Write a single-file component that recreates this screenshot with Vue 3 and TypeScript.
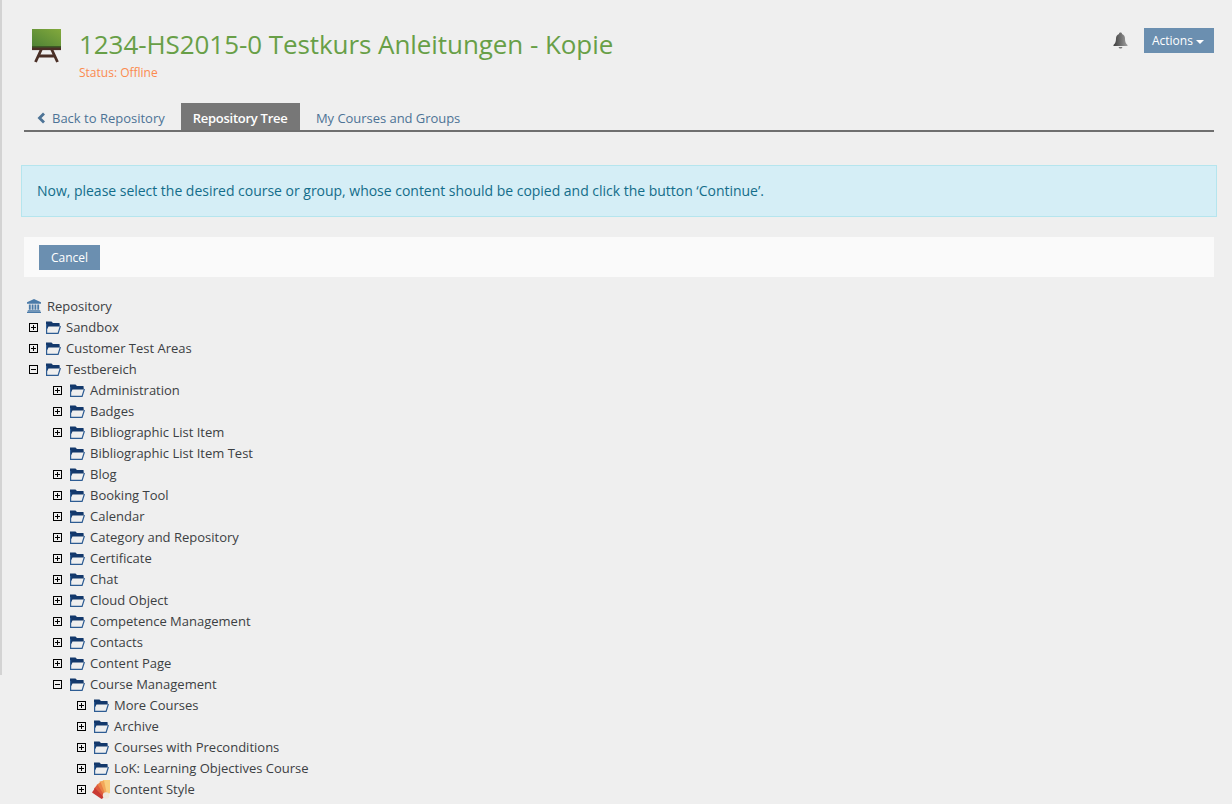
<template>
  <div class="page">
    <div class="side-strip"></div>

    <header class="head">
      <svg class="course-icon" width="30" height="34" viewBox="0 0 30 34">
        <defs>
          <linearGradient id="board" x1="0" y1="1" x2="1" y2="0">
            <stop offset="0" stop-color="#4f8336" />
            <stop offset="1" stop-color="#83a93c" />
          </linearGradient>
        </defs>
        <rect x="0" y="0" width="29" height="17" fill="url(#board)" />
        <rect x="0" y="17" width="29" height="2.5" fill="#3d5a26" />
        <path d="M0 18.500h29v2.600H0z" fill="#4a2f26" />
        <path d="M9.500 20 3.500 33M19.500 20l6 13M6.500 27h16" stroke="#4a2f26" stroke-width="2.800" fill="none" />
      </svg>
      <div class="head-text">
        <h1>1234-HS2015-0 Testkurs Anleitungen - Kopie</h1>
        <div class="status">Status: Offline</div>
      </div>
      <svg class="bell" width="15" height="17" viewBox="0 0 15 17">
        <defs>
          <linearGradient id="bellfill" x1="0" y1="0" x2="1" y2="0">
            <stop offset="0" stop-color="#3d3d3d" />
            <stop offset="1" stop-color="#a0a0a0" />
          </linearGradient>
        </defs>
        <path d="M7.500 0.500c1 0 1.500.6 1.500 1.400 2 .6 3 2.300 3 4.600 0 3 .6 4.700 2.500 6.500v1H.5v-1C2.400 11.200 3 9.500 3 6.500c0-2.300 1-4 3-4.600C6 1.100 6.500.5 7.500.5z" fill="url(#bellfill)" />
        <path d="M5.600 15h3.800c-.2 1-1 1.600-1.900 1.600S5.800 16 5.600 15z" fill="#777" />
      </svg>
      <button class="btn actions">Actions <span class="caret"></span></button>
    </header>

    <nav class="tabs">
      <a class="tab">
        <svg width="9" height="12" viewBox="0 0 9 12"><path d="M7 1.500 2.500 6 7 10.500" fill="none" stroke="#4d7396" stroke-width="2.800" /></svg>
        Back to Repository
      </a>
      <a class="tab active">Repository Tree</a>
      <a class="tab">My Courses and Groups</a>
    </nav>

    <div class="alert">Now, please select the desired course or group, whose content should be copied and click the button ‘Continue’.</div>

    <div class="button-bar">
      <button class="btn">Cancel</button>
    </div>

    <div class="tree">
      <div class="row">
        <svg class="root-icon" width="14" height="14" viewBox="0 0 15 15">
          <path d="M7.500 0 15 3.600V5H0V3.600z" fill="#4a7aa8" />
          <path d="M2 5.800h2v5.700H2zM5 5.800h2v5.700H5zM8 5.800h2v5.700H8zM11 5.800h2v5.700h-2z" fill="#4a7aa8" />
          <path d="M.8 12h13.400v1.300H.8zM0 13.700h15V15H0z" fill="#4a7aa8" />
        </svg>
        <span>Repository</span>
      </div>
      <div v-for="item in items" :key="item.label" class="row" :class="'depth-' + item.depth">
        <svg v-if="item.toggle" class="toggle" width="9" height="9" viewBox="0 0 9 9">
          <rect x=".5" y=".5" width="8" height="8" fill="none" stroke="#000" />
          <path d="M2 4.500h5" stroke="#000" />
          <path v-if="item.toggle === 'plus'" d="M4.500 2v5" stroke="#000" />
        </svg>
        <span v-else class="toggle"></span>
        <svg v-if="item.icon === 'style'" class="fan-icon" width="19" height="21" viewBox="0 0 19 21">
          <path d="M11 1h7v13l-4 2z" fill="#f9cd7c" />
          <path d="M7.500 2.500 12 1.500l3 14-3 1.500z" fill="#f2a85a" />
          <path d="M4.500 6 8.500 3l5.500 14-3 1z" fill="#e87f45" />
          <path d="M2 9.500 5.500 5.500 13 17.500l-3 1z" fill="#dd5a3c" />
          <path d="M0 13.500 3 9l9 9.500-2.500 1.500z" fill="#c93a33" />
          <circle cx="14" cy="16.500" r="3.200" fill="#efe7dc" />
        </svg>
        <svg v-else class="node-icon" width="15" height="13" viewBox="0 0 15 13">
          <path d="M0 .5h5.500L7 2h6.500l.3 3.500H2.500L1.200 8H0z" fill="#13386b" />
          <path d="M.6 3v9.400h11.500L14.400 5" fill="none" stroke="#2d5c93" stroke-width="1.200" />
        </svg>
        <span>{{ item.label }}</span>
      </div>
    </div>
  </div>
</template>

<script setup lang="ts">
interface TreeItem {
  label: string
  depth: number
  toggle?: 'plus' | 'minus'
  icon?: 'style'
}

const items: TreeItem[] = [
  { label: 'Sandbox', depth: 0, toggle: 'plus' },
  { label: 'Customer Test Areas', depth: 0, toggle: 'plus' },
  { label: 'Testbereich', depth: 0, toggle: 'minus' },
  { label: 'Administration', depth: 1, toggle: 'plus' },
  { label: 'Badges', depth: 1, toggle: 'plus' },
  { label: 'Bibliographic List Item', depth: 1, toggle: 'plus' },
  { label: 'Bibliographic List Item Test', depth: 1 },
  { label: 'Blog', depth: 1, toggle: 'plus' },
  { label: 'Booking Tool', depth: 1, toggle: 'plus' },
  { label: 'Calendar', depth: 1, toggle: 'plus' },
  { label: 'Category and Repository', depth: 1, toggle: 'plus' },
  { label: 'Certificate', depth: 1, toggle: 'plus' },
  { label: 'Chat', depth: 1, toggle: 'plus' },
  { label: 'Cloud Object', depth: 1, toggle: 'plus' },
  { label: 'Competence Management', depth: 1, toggle: 'plus' },
  { label: 'Contacts', depth: 1, toggle: 'plus' },
  { label: 'Content Page', depth: 1, toggle: 'plus' },
  { label: 'Course Management', depth: 1, toggle: 'minus' },
  { label: 'More Courses', depth: 2, toggle: 'plus' },
  { label: 'Archive', depth: 2, toggle: 'plus' },
  { label: 'Courses with Preconditions', depth: 2, toggle: 'plus' },
  { label: 'LoK: Learning Objectives Course', depth: 2, toggle: 'plus' },
  { label: 'Content Style', depth: 2, toggle: 'plus', icon: 'style' }
]
</script>

<style>
html,
body {
  margin: 0;
  height: 804px;
  overflow: hidden;
  background: #efefef;
}
</style>

<style scoped>
.page {
  position: relative;
  height: 804px;
  overflow: hidden;
  padding: 29px 18px 0 24px;
  box-sizing: border-box;
  font-family: "Open Sans", sans-serif;
  font-size: 13px;
  color: #3c4043;
  background: #efefef;
}

.side-strip {
  position: absolute;
  left: 0;
  top: 0;
  width: 2px;
  height: 675px;
  background: #d3d3d3;
}

.head {
  display: flex;
  align-items: flex-start;
  height: 74px;
  padding-left: 8px;
}

.course-icon {
  flex: none;
}

.head-text {
  margin-left: 17px;
  flex: 1;
}

h1 {
  margin: -1px 0 0;
  font-size: 26px;
  font-weight: 400;
  line-height: 32px;
  letter-spacing: -0.07px;
  color: #689f47;
}

.status {
  margin-top: 4px;
  font-size: 12px;
  line-height: 17px;
  color: #fb8b4f;
}

.bell {
  margin: 3px 16px 0 0;
}

.btn {
  border: 0;
  background: #6b8fb0;
  color: #fff;
  font-family: inherit;
  font-size: 12px;
  line-height: 25px;
  height: 25px;
  padding: 0 12px;
}

.actions {
  margin-top: -1px;
  padding: 0 10px 0 8px;
}

.caret {
  display: inline-block;
  width: 0;
  height: 0;
  vertical-align: middle;
  border-top: 4px solid #fff;
  border-left: 4px solid transparent;
  border-right: 4px solid transparent;
}

.tabs {
  display: flex;
  height: 29px;
  border-bottom: 2px solid #6f6f6f;
  box-sizing: border-box;
}

.tab {
  display: flex;
  align-items: center;
  gap: 6px;
  padding: 3px 12px 0;
  color: #4d7396;
  white-space: nowrap;
}

.tab:first-child {
  padding-left: 13px;
  padding-right: 16px;
}

.tab:last-child {
  padding-left: 15.5px;
  letter-spacing: -0.04px;
}

.tab.active {
  padding-right: 13px;
  background: #777;
  color: #fff;
  font-weight: 600;
  letter-spacing: -0.27px;
}

.alert {
  margin: 33px -3px 0;
  height: 52px;
  box-sizing: border-box;
  padding: 0 15px 2px;
  display: flex;
  align-items: center;
  background: #d5eef6;
  border: 1px solid #b5e5ee;
  color: #136d8a;
  font-size: 14px;
  letter-spacing: -0.02px;
}

.button-bar {
  margin-top: 20px;
  height: 40px;
  padding: 8px 15px 0;
  box-sizing: border-box;
  background: #fafafa;
}

.tree {
  margin-top: 18px;
}

.row {
  display: flex;
  align-items: center;
  height: 21px;
  white-space: nowrap;
}

.root-icon {
  flex: none;
  margin: 0 6px 0 3px;
}

.toggle {
  width: 9px;
  height: 9px;
  flex: none;
  margin: 1px 7px 0 5px;
}

.node-icon {
  flex: none;
  margin: 2px 5px 0 1px;
}

.fan-icon {
  flex: none;
  margin: 2px 3px 0 -1px;
}

.depth-1 {
  padding-left: 24px;
}

.depth-2 {
  padding-left: 48px;
}
</style>
